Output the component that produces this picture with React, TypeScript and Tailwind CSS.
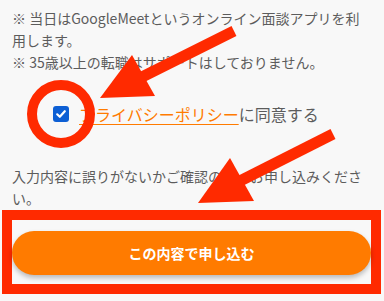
import React from "react";

function Annotations() {
  return (
    <svg
      className="absolute inset-0 pointer-events-none"
      width="384"
      height="301"
      viewBox="0 0 384 301"
    >
      <circle cx="61" cy="114" r="29" fill="none" stroke="#ff2a00" strokeWidth="10" />
      <line x1="234" y1="31" x2="142" y2="77" stroke="#ff2a00" strokeWidth="11" />
      <polygon points="132,55 155,96 100,98" fill="#ff2a00" />
      <line x1="333" y1="134" x2="240" y2="181" stroke="#ff2a00" strokeWidth="11" />
      <polygon points="230,158 254,201 198,203" fill="#ff2a00" />
    </svg>
  );
}

export default function App() {
  return (
    <div className="relative h-[301px] w-[384px] overflow-hidden bg-[#f8f8f8] font-['Noto_Sans_CJK_JP','Noto_Sans',sans-serif]">
      <div className="px-3 pt-[7px] text-[14px] leading-[22px] text-[#5c5c5c]">
        <p>※&nbsp;当日はGoogleMeetというオンライン面談アプリを利用します。</p>
        <p>※&nbsp;35歳以上の転職はサポートはしておりません。</p>
      </div>

      <div className="mt-[29px] flex items-center gap-[10px] pl-[53px] text-[16px] leading-[24px] text-[#5c5c5c]">
        <span className="flex h-[16px] w-[16px] items-center justify-center rounded-[3px] bg-[#0d5fd4]">
          <svg width="12" height="12" viewBox="0 0 12 12">
            <path d="M2.2 6.3 L4.8 8.8 L9.8 3.2" fill="none" stroke="#fff" strokeWidth="2.2" strokeLinecap="round" strokeLinejoin="round" />
          </svg>
        </span>
        <p>
          <a href="#" className="text-[#ff7b00] underline underline-offset-[3px]">
            プライバシーポリシー
          </a>
          に同意する
        </p>
      </div>

      <p className="mt-[39px] px-3 text-[14px] leading-[22px] text-[#5c5c5c]">
        入力内容に誤りがないかご確認の上、お申し込みください。
      </p>

      <div className="mt-px ml-[2px] mr-[3px] border-[10px] border-[#ff2a00] pt-[11px] pb-[9px]">
        <button className="h-[44px] w-full rounded-full bg-[#ff7b00] text-[14px] font-bold text-white shadow-[0_3px_5px_rgba(0,0,0,0.25)]">
          この内容で申し込む
        </button>
      </div>

      <Annotations />
    </div>
  );
}
